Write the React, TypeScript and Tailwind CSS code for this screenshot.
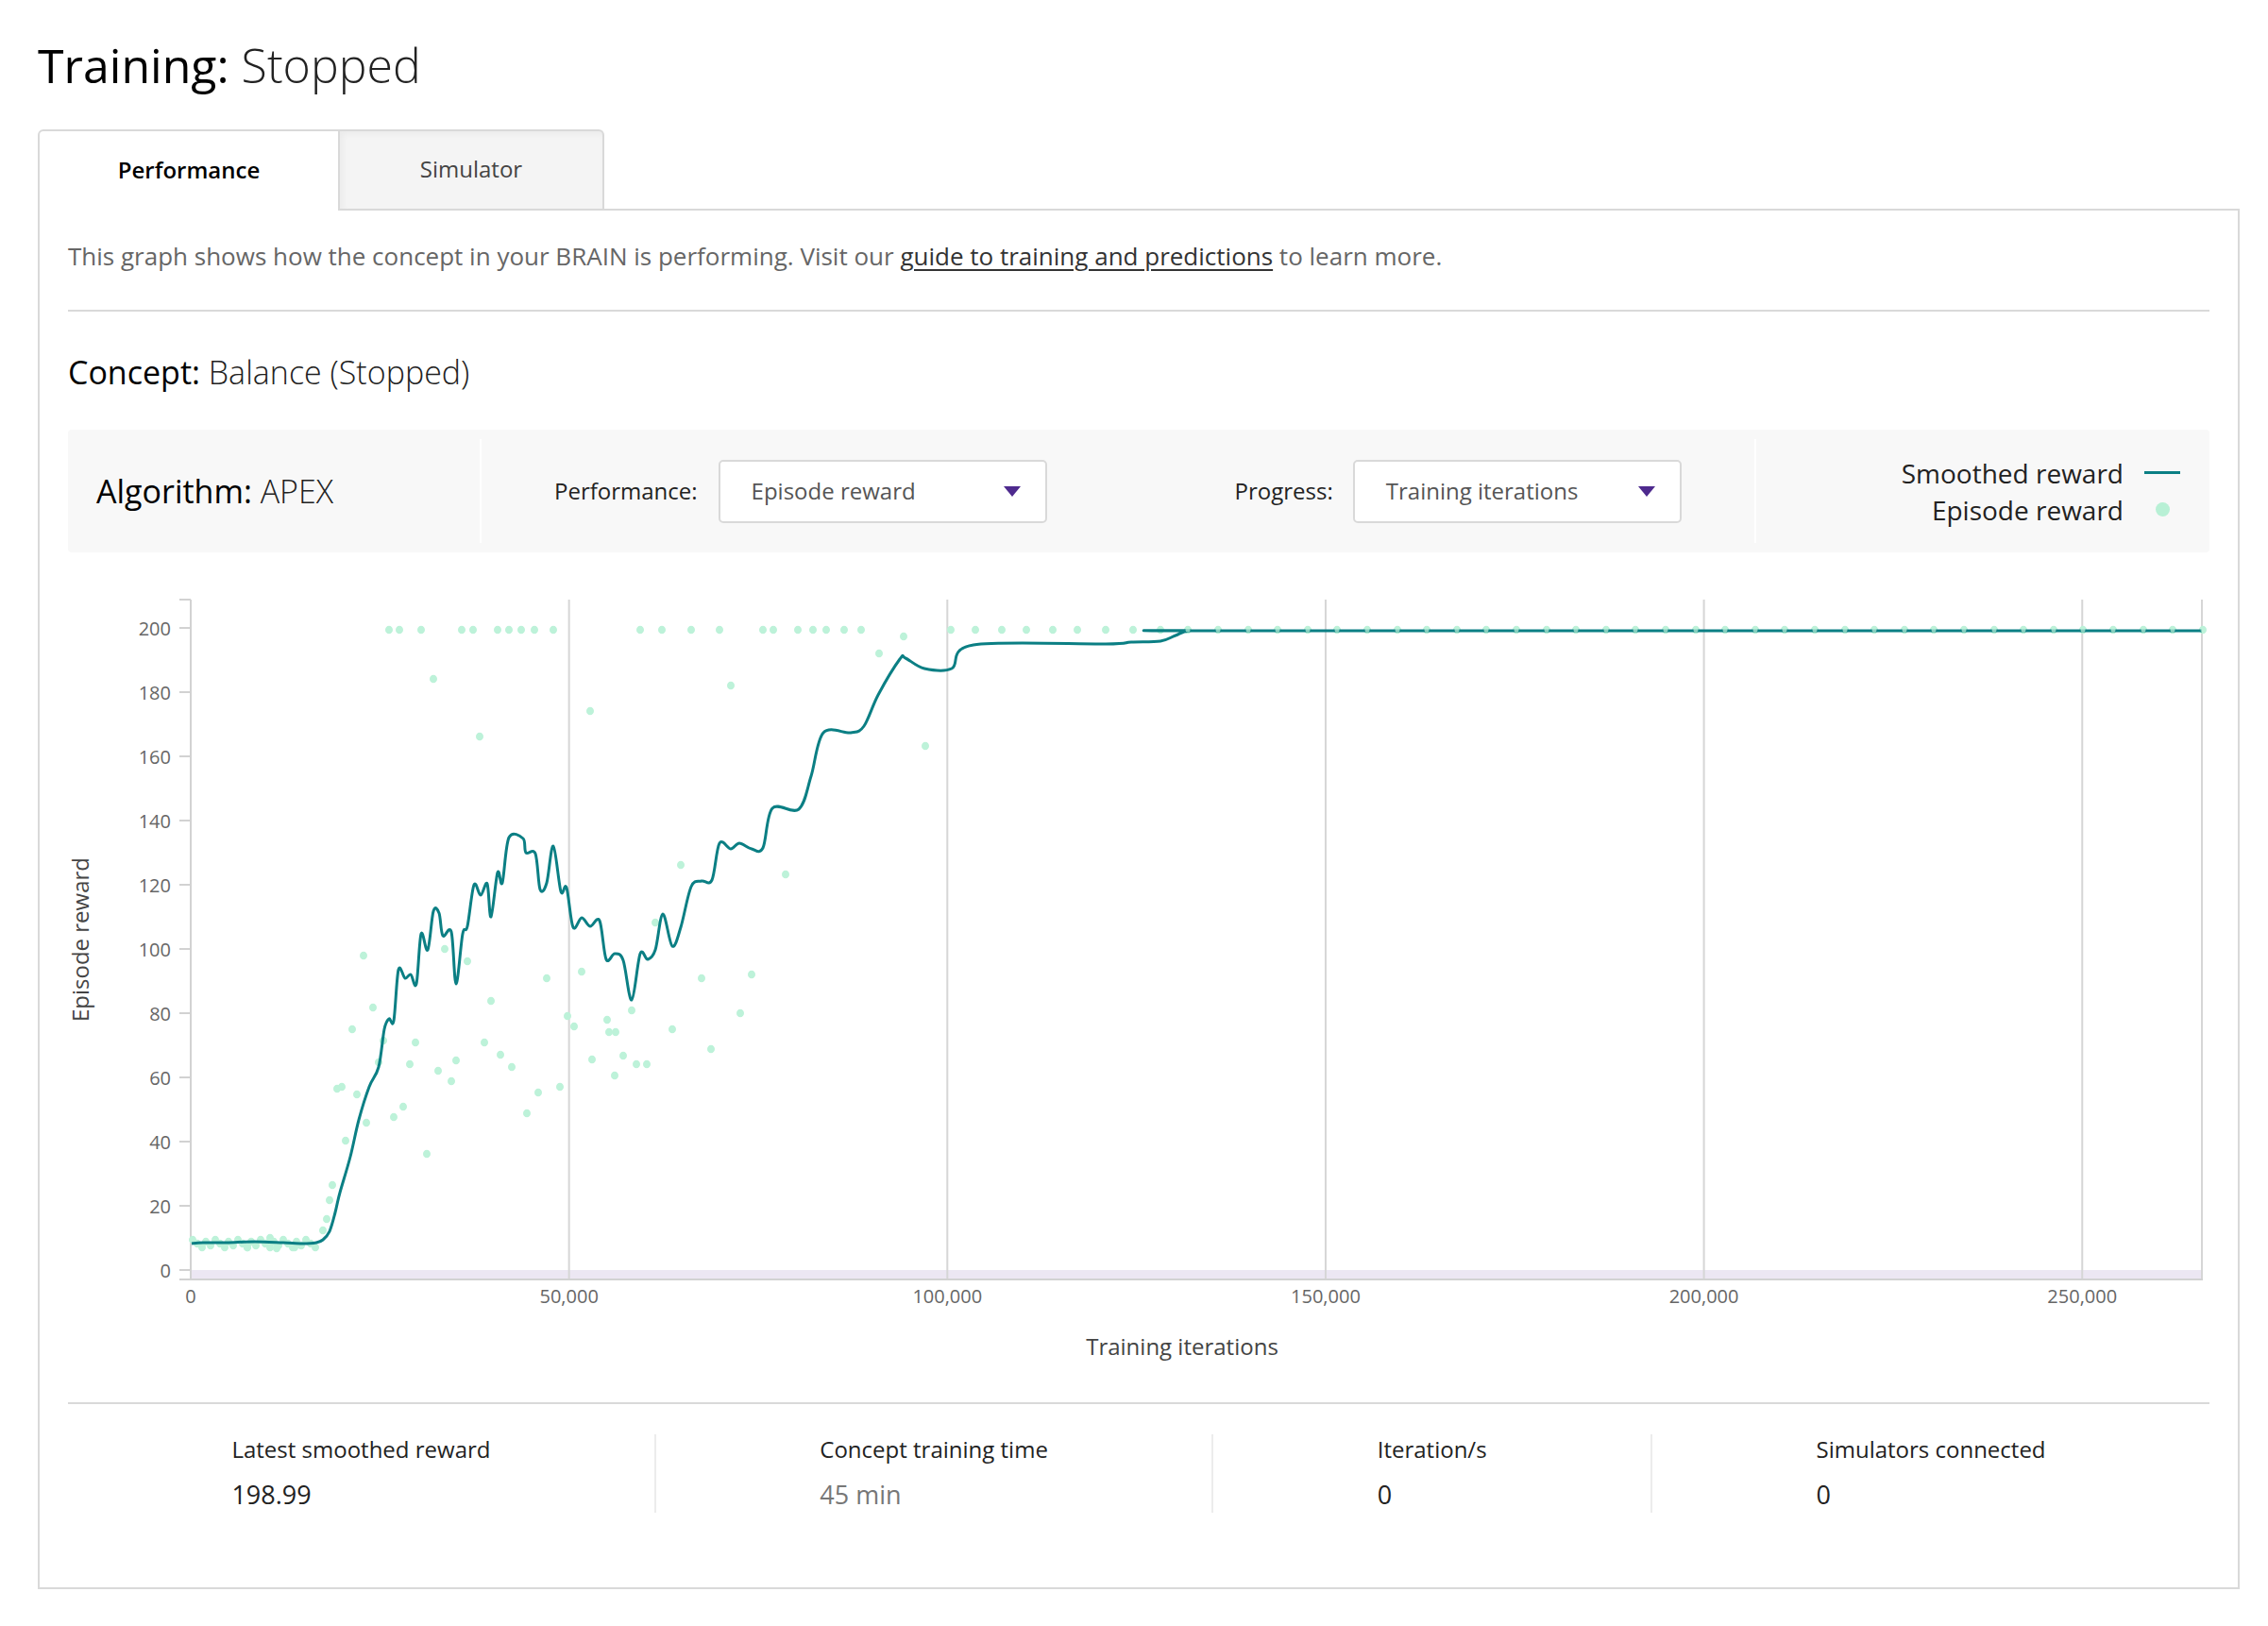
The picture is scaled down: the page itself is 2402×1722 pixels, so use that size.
const TEAL = "#0b7f84";
const MINT = "#bdf2d9";

// smoothed reward, page coordinates
const LINE: number[][] = [
  [203, 1318], [215, 1317], [240, 1317], [270, 1316], [300, 1317], [320, 1318], [335, 1317],
  [342, 1314], [349, 1305], [355, 1285], [360, 1264], [371, 1226], [380, 1187], [391, 1152],
  [401, 1131], [407, 1091], [412, 1080], [417, 1082], [422, 1028], [429, 1037], [435, 1033],
  [441, 1043], [446, 990], [453, 1007], [459, 966], [465, 968], [469, 992], [478, 988],
  [483, 1043], [490, 990], [495, 982], [502, 938], [509, 949], [516, 937], [520, 972],
  [527, 925], [532, 936], [539, 888], [554, 889], [557, 904], [567, 905], [572, 943],
  [579, 936], [586, 897], [594, 945], [600, 941], [607, 983], [616, 973], [625, 982],
  [635, 976], [642, 1017], [651, 1011], [660, 1018], [669, 1060], [678, 1011], [686, 1017],
  [694, 1007], [702, 969], [712, 1003], [721, 983], [732, 940], [743, 934], [754, 933],
  [762, 894], [774, 900], [783, 894], [796, 900], [808, 899], [818, 857], [846, 858],
  [859, 823], [872, 777], [901, 777], [915, 770], [930, 737], [953, 699], [959, 698],
  [979, 709], [1008, 709], [1031, 684], [1171, 683], [1198, 681], [1229, 680], [1245, 674],
  [1260, 669], [1300, 669], [2332, 669],
];

const TOP_X = [
  412, 423, 446, 489, 501, 527, 539, 552, 566, 586, 678, 701, 732, 762, 808, 819, 845, 861,
  875, 894, 912, 1007, 1033, 1061, 1087, 1115, 1141, 1171, 1200, 1229, 1258, 1290,
];
for (let x = 1290 + 31.6; x <= 2333; x += 31.6) TOP_X.push(Math.round(x));

const SCATTER: number[][] = [
  [459, 720], [508, 781], [625, 754], [385, 1013], [395, 1068], [373, 1091], [471, 1006],
  [495, 1019], [520, 1061], [579, 1037], [601, 1077], [608, 1088], [616, 1030], [643, 1081],
  [652, 1094], [669, 1071], [694, 978], [774, 727], [957, 675], [931, 693], [980, 791],
  [721, 917], [832, 927], [743, 1037], [796, 1033], [712, 1091], [784, 1074], [753, 1112],
  [660, 1119], [357, 1154], [362, 1152], [378, 1160], [388, 1190], [401, 1126], [406, 1103],
  [417, 1184], [427, 1173], [434, 1128], [440, 1105], [452, 1223], [464, 1135], [478, 1146],
  [483, 1124], [513, 1105], [530, 1118], [542, 1131], [558, 1180], [570, 1158], [593, 1152],
  [627, 1123], [645, 1094], [651, 1140], [674, 1128], [685, 1128], [366, 1209], [352, 1256],
  [349, 1272], [346, 1292], [342, 1304],
];
for (let i = 0; i * 4.8 + 204 <= 338; i++) {
  SCATTER.push([Math.round(204 + i * 4.8), 1318 + (((i * 7) % 5) - 2) * 2]);
}
SCATTER.push([286, 1312], [293, 1323], [262, 1322], [312, 1322]);

function smooth(pts: number[][]) {
  let d = `M${pts[0][0]},${pts[0][1]}`;
  for (let i = 0; i < pts.length - 1; i++) {
    const p0 = pts[i - 1] || pts[i];
    const p1 = pts[i];
    const p2 = pts[i + 1];
    const p3 = pts[i + 2] || p2;
    const c1x = p1[0] + (p2[0] - p0[0]) / 6;
    const c1y = p1[1] + (p2[1] - p0[1]) / 6;
    const c2x = p2[0] - (p3[0] - p1[0]) / 6;
    const c2y = p2[1] - (p3[1] - p1[1]) / 6;
    d += ` C${c1x.toFixed(1)},${c1y.toFixed(1)} ${c2x.toFixed(1)},${c2y.toFixed(1)} ${p2[0]},${p2[1]}`;
  }
  return d;
}

const yOf = (r: number) => 1346 - r * 3.4;
const xOf = (it: number) => 202 + it * 0.008013;

function Chart() {
  const yTicks = [0, 20, 40, 60, 80, 100, 120, 140, 160, 180, 200];
  const xTicks = [0, 50000, 100000, 150000, 200000, 250000];
  return (
    <svg width="2269" height="900" className="block overflow-visible" fontFamily="'Open Sans', sans-serif">
      <g transform="translate(-72 -586)">
        <rect x="203" y="1346" width="2129" height="9" fill="#ece7f3" />
        {xTicks.slice(1).map((t) => (
          <line key={t} x1={xOf(t)} x2={xOf(t)} y1="636" y2="1355" stroke="#d6d6d6" strokeWidth="2" />
        ))}
        <line x1="2332" x2="2332" y1="636" y2="1355" stroke="#d6d6d6" strokeWidth="2" />
        <line x1="202" x2="202" y1="636" y2="1357" stroke="#d2d2d2" strokeWidth="2" />
        <line x1="190" x2="2333" y1="1356" y2="1356" stroke="#d2d2d2" strokeWidth="2" />
        <line x1="190" x2="202" y1="636" y2="636" stroke="#d2d2d2" strokeWidth="2" />
        {yTicks.map((t) => (
          <g key={t}>
            <line x1="190" x2="202" y1={yOf(t)} y2={yOf(t)} stroke="#d2d2d2" strokeWidth="2" />
            <text x="181" y={yOf(t)} textAnchor="end" dominantBaseline="central" fontSize="20" fill="#666">
              {t}
            </text>
          </g>
        ))}
        {xTicks.map((t) => (
          <text key={t} x={xOf(t)} y="1373" textAnchor="middle" dominantBaseline="central" fontSize="20" fill="#666">
            {t.toLocaleString("en-US")}
          </text>
        ))}
        {SCATTER.map(([x, y], i) => (
          <ellipse key={i} cx={x} cy={y} rx="4" ry="4.3" fill={MINT} />
        ))}
        {TOP_X.map((x, i) => (
          <ellipse key={"t" + i} cx={x} cy="668" rx="4" ry="4.3" fill={MINT} />
        ))}
        <path d={smooth(LINE)} fill="none" stroke={TEAL} strokeWidth="3" strokeLinejoin="round" />
        {TOP_X.filter((x) => x > 1256).map((x, i) => (
          <circle key={"o" + i} cx={x} cy="668" r="2.5" fill={MINT} opacity="0.7" />
        ))}
        <text x="1252" y="1426" textAnchor="middle" dominantBaseline="central" fontSize="24" fill="#444">
          Training iterations
        </text>
        <text
          x="84"
          y="996"
          textAnchor="middle"
          dominantBaseline="central"
          fontSize="24"
          fill="#444"
          transform="rotate(-90 84 996)"
        >
          Episode reward
        </text>
      </g>
    </svg>
  );
}

function Select({ value }: { value: string }) {
  return (
    <div className="flex h-[67px] w-[348px] items-center justify-between rounded-[5px] border-2 border-[#d9d9d9] bg-white pl-[33px] pr-[26px]">
      <span className="text-[24px] text-[#555]">{value}</span>
      <svg width="18" height="11" viewBox="0 0 18 11">
        <path d="M0 0 L18 0 L9 11 Z" fill="#4e2a8e" />
      </svg>
    </div>
  );
}

const STATS = [
  { label: "Latest smoothed reward", value: "198.99", color: "text-[#222]" },
  { label: "Concept training time", value: "45 min", color: "text-[#777]" },
  { label: "Iteration/s", value: "0", color: "text-[#222]" },
  { label: "Simulators connected", value: "0", color: "text-[#222]" },
];

export default function App() {
  return (
    <div className="min-h-[1722px] bg-white pl-[40px] pr-[30px] pt-[37px] font-['Open_Sans',sans-serif] text-[#222]">
      <h1 className="h-[65px] text-[50px] leading-[65px] text-black">
        Training: <span className="font-light text-[#222]">Stopped</span>
      </h1>

      <div className="relative z-10 mt-[35px] -mb-[2px] flex items-end">
        <div className="flex h-[86px] w-[320px] items-center justify-center rounded-tl-[6px] border-2 border-b-0 border-[#d9d9d9] bg-white pb-[3px] text-[24px] font-semibold text-black">
          Performance
        </div>
        <div className="mb-[2px] flex h-[84px] w-[280px] items-center justify-center rounded-tr-[6px] border-t-2 border-r-2 border-[#d9d9d9] bg-[#f4f4f4] pb-[2px] text-[24px] text-[#444] shadow-[inset_3px_3px_6px_rgba(0,0,0,0.04)]">
          Simulator
        </div>
      </div>

      <div className="border-2 border-[#d9d9d9] px-[30px] pt-[30px]">
        <p className="text-[26px] leading-[36px] text-[#666]">
          This graph shows how the concept in your BRAIN is performing. Visit our{" "}
          <a className="text-[#333] underline underline-offset-[4px]">guide to training and predictions</a> to learn
          more.
        </p>
        <div className="mt-[39px] h-[2px] bg-[#d9d9d9]" />

        <div className="mt-[41px] text-[34px] leading-[46px] text-black">
          Concept: <span className="font-light text-[#222]">Balance (Stopped)</span>
        </div>

        <div className="mt-[38px] flex h-[130px] items-center rounded-[4px] bg-[#f8f8f8]">
          <div className="flex w-[436px] items-center pl-[30px] text-[34px] text-black">
            Algorithm:&nbsp;<span className="font-light text-[#222]">APEX</span>
          </div>
          <div className="h-[110px] w-[2px] bg-white" />
          <div className="flex w-[1348px] items-center pl-[77px]">
            <span className="text-[24px] text-[#222]">Performance:</span>
            <div className="ml-[22px]">
              <Select value="Episode reward" />
            </div>
            <span className="ml-[199px] text-[24px] text-[#222]">Progress:</span>
            <div className="ml-[21px]">
              <Select value="Training iterations" />
            </div>
          </div>
          <div className="h-[110px] w-[2px] bg-white" />
          <div className="flex flex-1 flex-col items-end pr-[31px]">
            <div className="flex h-[39px] items-center">
              <span className="text-[28px] text-[#222]">Smoothed reward</span>
              <div className="ml-[22px] flex w-[38px] justify-center">
                <div className="h-[3px] w-[38px] bg-[#0b7f84]" />
              </div>
            </div>
            <div className="flex h-[39px] items-center">
              <span className="text-[28px] text-[#222]">Episode reward</span>
              <div className="ml-[22px] flex w-[38px] justify-center">
                <div className="h-[15px] w-[15px] rounded-full bg-[#b8f0d5]" />
              </div>
            </div>
          </div>
        </div>

        <Chart />

        <div className="h-[2px] bg-[#d9d9d9]" />

        <div className="flex pb-[79px] pt-[32px]">
          {STATS.map((s, i) => (
            <div
              key={s.label}
              className={i > 0 ? "flex flex-auto justify-center border-l-2 border-[#ececec]" : "flex flex-auto justify-center"}
            >
              <div>
                <div className="text-[24px] leading-[32px] text-[#222]">{s.label}</div>
                <div className={"mt-[13px] text-[27px] leading-[38px] " + s.color}>{s.value}</div>
              </div>
            </div>
          ))}
        </div>
      </div>
    </div>
  );
}
